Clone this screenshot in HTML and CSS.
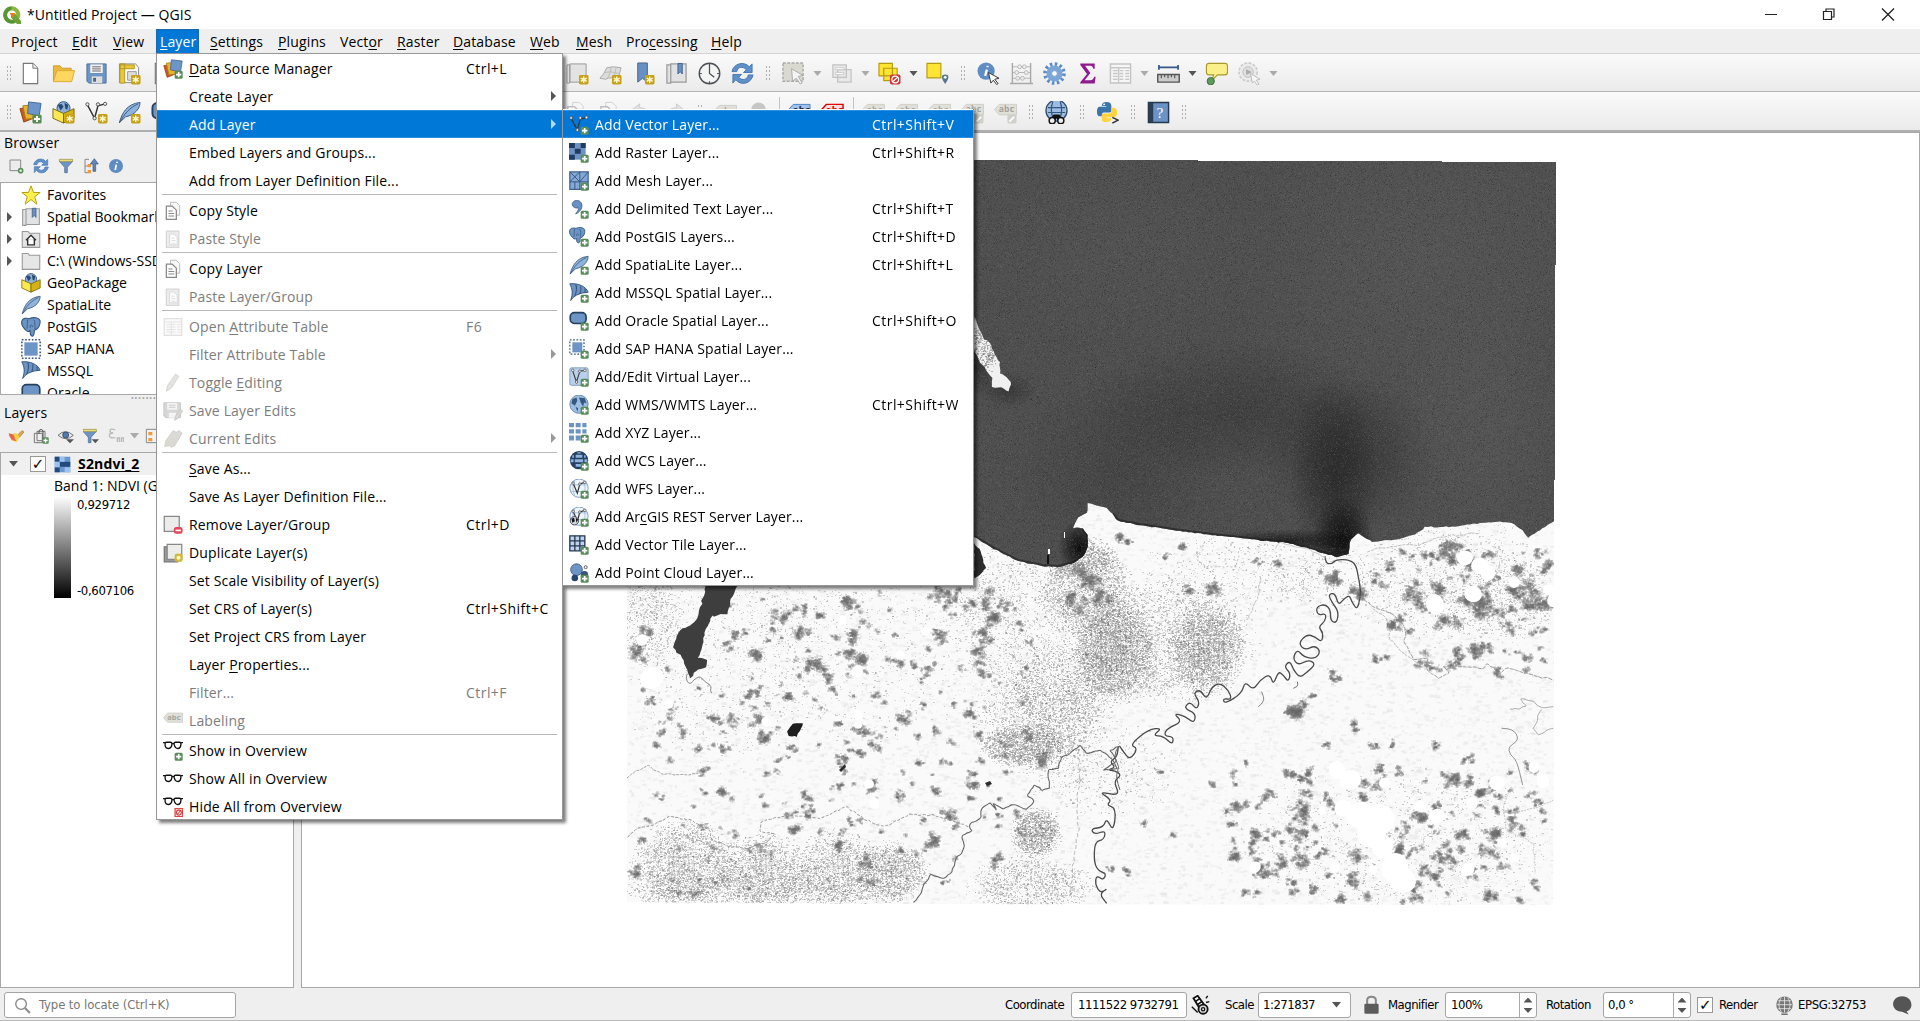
FILE: index.html
```html
<!DOCTYPE html>
<html lang="en">
<head>
<meta charset="utf-8">
<title>*Untitled Project — QGIS</title>
<link rel="stylesheet" href="styles.css">
</head>
<body>
<svg class="sprite" aria-hidden="true">
  <symbol id="plus" viewBox="0 0 24 24"><rect x="14" y="14" width="9.6" height="9.6" rx="1.8" fill="#5a8c5a"/><path d="M18.8 15.6v6.4M15.6 18.8h6.4" stroke="#fff" stroke-width="2"/></symbol>
  <symbol id="star" viewBox="0 0 24 24"><rect x="13.5" y="13.5" width="10" height="10" rx="1.5" fill="#c4a21c"/><path d="M18.5 15v7M15.4 16.8l6.2 3.5M21.6 16.8l-6.2 3.5" stroke="#fff6c8" stroke-width="1.5"/></symbol>
  <symbol id="logo" viewBox="0 0 20 20"><path d="M10 3.3a6.7 6.7 0 1 0 3 12.6" fill="none" stroke="#589632" stroke-width="4"/><path d="M9.5 3.3a6.7 6.7 0 0 1 6.3 9.2" fill="none" stroke="#8cb63c" stroke-width="4"/><path d="M9 8.500h4l6 7.500v3h-4L9 12.500z" fill="#6fa236"/><path d="M8 8h5l-1.500 4.500L9 11z" fill="#ee7913"/></symbol>
  <symbol id="new" viewBox="0 0 24 24"><path d="M4.500 1.500h10l5 5v16h-15z" fill="#fff" stroke="#777" stroke-width="1.200"/><path d="M14.500 1.500v5h5" fill="#eee" stroke="#777"/></symbol>
  <symbol id="open" viewBox="0 0 24 24"><path d="M1.500 20V4h7l2 2.500h9.500V10" fill="#e8b93c" stroke="#cf9c2c"/><path d="M1.500 20.500L5 9h18.500l-3 11.500z" fill="#ffd75e" stroke="#dca935"/></symbol>
  <symbol id="save" viewBox="0 0 24 24"><path d="M2 2h20v20H4l-2-2z" fill="#6d95c4" stroke="#4c6f98"/><path d="M5.500 2.500h13v9h-13z" fill="#f2f2f2"/><path d="M7.500 5h9M7.500 7.200h9M7.500 9.400h9" stroke="#666"/><path d="M7 15h11v7H7z" fill="#ddd"/><path d="M8.500 16.500h3v4h-3z" fill="#47658b"/></symbol>
  <symbol id="layout" viewBox="0 0 24 24"><path d="M1.500 21.500V2h17l3 4v15.500z" fill="#fff" stroke="#8a8a8a"/><path d="M2 2h5v20H2zM2 3h15v4H2z" fill="#e9c93b" stroke="#b3971f"/><path d="M10 10h9v9h-9z" fill="#ddd" stroke="#999"/><use href="#star"/></symbol>
  <symbol id="dsm" viewBox="0 0 24 24"><path d="M1 8l11-2 3 12-10 4z" fill="#c75a1e" stroke="#964213"/><path d="M4 5l11-1 1 14-9 1z" fill="#e9b42d" stroke="#a97e17"/><path d="M10 1l13 1.500-2 13L9 13z" fill="#6c96c9" stroke="#44658e"/><use href="#plus"/></symbol>
  <symbol id="gpkg" viewBox="0 0 24 24"><circle cx="12" cy="7.500" r="6.800" fill="#8fb0d8" stroke="#35587f"/><path d="M6 4l4-1 2 3-3 4zM13 2l4 2-1 5-2-1z" fill="#27496f"/><path d="M1 8l11 5v10L1 18z" fill="#fce94f" stroke="#7a6a12"/><path d="M23 8l-11 5v10l11-5z" fill="#d6b212" stroke="#7a6a12"/></symbol>
  <symbol id="gpkgnew" viewBox="0 0 24 24"><use href="#gpkg"/><use href="#star"/></symbol>
  <symbol id="vee" viewBox="0 0 24 24"><path d="M2.500 4L10 18 13.500 5 21 3" fill="none" stroke="#333" stroke-width="1.500"/><g fill="#eee" stroke="#555"><circle cx="2.500" cy="3.500" r="1.700"/><circle cx="13.500" cy="3.500" r="1.700"/><circle cx="21" cy="3" r="1.700"/><circle cx="10" cy="18" r="1.700"/></g></symbol>
  <symbol id="veenew" viewBox="0 0 24 24"><use href="#vee"/><use href="#star"/></symbol>
  <symbol id="addvec" viewBox="0 0 24 24"><use href="#vee"/><use href="#plus"/></symbol>
  <symbol id="feather" viewBox="0 0 24 24"><path d="M1.500 22.500C4 13 9 3 23 1.500c0 6-5 13-15 15z" fill="#8fb4dc" stroke="#3d5a7d"/><path d="M1.500 23C6 14 12 7 21 3" fill="none" stroke="#3d5a7d"/></symbol>
  <symbol id="feathernew" viewBox="0 0 24 24"><use href="#feather"/><use href="#star"/></symbol>
  <symbol id="addfeather" viewBox="0 0 24 24"><use href="#feather"/><use href="#plus"/></symbol>
  <symbol id="raster" viewBox="0 0 24 24"><path d="M1 1h22v22H1z" fill="#6a97cd"/><path d="M1 1h7v7H1zM15 8h8v7h-8zM8 8h7v7H8zM1 16h7v7H1z" fill="#234a7c"/><path d="M8 1h7v7H8zM15 16h8v7h-8zM1 8h7v8H1z" fill="#9cc3ee"/></symbol>
  <symbol id="addraster" viewBox="0 0 24 24"><path d="M0 0h20v20H0z" fill="#6d93c4"/><path d="M0 0h7v6H0zM14 0h6v6h-6zM7 7h7v6H7zM0 14h7v6H0z" fill="#1f3b60"/><use href="#plus"/></symbol>
  <symbol id="addmesh" viewBox="0 0 24 24"><path d="M1 1h22v21H1z" fill="#83a9d6" stroke="#43648c" stroke-width="1.500"/><path d="M1 13h22M13 1v21M1 1l12 12M13 1L1 13M23 1L13 13M7 13v9" stroke="#3a5a82" stroke-width="1.200"/><use href="#plus"/></symbol>
  <symbol id="addcomma" viewBox="0 0 24 24"><path d="M4 7C3 1 14-1 15.500 7c.5 5-3 9-7.500 11 2-3 4-5 3-7.500-3 1-6.500-.5-7-3.500z" fill="#6991c4" stroke="#3b5d87"/><use href="#plus"/></symbol>
  <symbol id="pg" viewBox="0 0 24 24"><path d="M1 5c1-4 6-4 9-3 4-2 12-2 13 3 0 4-2 9-5 10l-2 1c0 3 0 6-2 7-3 0-3-3-3-7-1 2-4 2-6-1C2 12 0 9 1 5z" fill="#6c95c5" stroke="#36557c" stroke-width="1.300"/><path d="M8 3c-1 4 0 8-1 11M15 3c3 3 1 6 2 12M11 13c-1-4 3-4 3-1" fill="none" stroke="#36557c"/></symbol>
  <symbol id="addpg" viewBox="0 0 24 24"><use href="#pg" width="20" height="20"/><use href="#plus"/></symbol>
  <symbol id="mssql" viewBox="0 0 24 24"><path d="M1 1c10-1 19 3 22 10l-7 1C8 14 5 17 2 21 5 12 4 7 1 1z" fill="#6c95c5" stroke="#36557c" stroke-width="1.200"/><path d="M8 1.500c2 5 1 9-1 14M14 4c1 4 0 7-1 9M19 6.500c1 2 0 4 0 5" fill="none" stroke="#36557c" stroke-width="1.300"/></symbol>
  <symbol id="addmssql" viewBox="0 0 24 24"><use href="#mssql"/><use href="#plus"/></symbol>
  <symbol id="oracle" viewBox="0 0 24 24"><rect x="1.500" y="2" width="21" height="16" rx="5" fill="#6c95c5" stroke="#25405f" stroke-width="2"/></symbol>
  <symbol id="addoracle" viewBox="0 0 24 24"><rect x="1.500" y="2" width="19" height="13" rx="5" fill="#6c95c5" stroke="#25405f" stroke-width="2"/><use href="#plus"/></symbol>
  <symbol id="hana" viewBox="0 0 24 24"><path d="M4 4h16v16H4z" fill="#6c95c5"/><path d="M1 1h22v22H1z" fill="none" stroke="#36557c" stroke-width="1.800" stroke-dasharray="2 2"/></symbol>
  <symbol id="addhana" viewBox="0 0 24 24"><path d="M4 4h12v12H4z" fill="#6c95c5"/><path d="M1 1h17v17H1z" fill="none" stroke="#36557c" stroke-width="1.500" stroke-dasharray="2 2"/><use href="#plus"/></symbol>
  <symbol id="addvirtual" viewBox="0 0 24 24"><rect x="1" y="1" width="22" height="21" rx="2" fill="#b9d0ec" stroke="#7791b2"/><path d="M4.500 5L9 18 13 5 19 4" fill="none" stroke="#444" stroke-width="1.400"/><g fill="#fff" stroke="#555"><circle cx="4.500" cy="4" r="1.500"/><circle cx="13" cy="5" r="1.500"/><circle cx="19" cy="4" r="1.500"/><circle cx="9" cy="18" r="1.500"/></g><use href="#plus"/></symbol>
  <symbol id="addwms" viewBox="0 0 24 24"><circle cx="12" cy="11" r="11" fill="#9dbce2" stroke="#5d7fa8"/><path d="M4 5l5-2 1 4-3 6-4-3zM12 3l7 1 2 6-3-1-1 5-3-5zM8 14l3 2-1 4z" fill="#35587f"/><use href="#plus"/></symbol>
  <symbol id="addxyz" viewBox="0 0 24 24"><path d="M0 0h6v5H0zM8 0h6v5H8zM16 0h5v5h-5zM0 7.500h6v5H0zM8 7.500h6v5H8zM16 7.500h5v5h-5zM0 15h6v6H0zM8 15h6v6H8z" fill="#6c95c5"/><use href="#plus"/></symbol>
  <symbol id="addwcs" viewBox="0 0 24 24"><circle cx="12" cy="11" r="11" fill="#233f61"/><path d="M8 4.500h8V8H8zM7 10h10v3.500H7zM8 15.500h8V19H8zM2 10h3.500v3.500H2zM18.500 10H22v3.500h-3.500zM4 5h2v3H4zM18 5h2v3h-2zM10 1.500h4v1.500h-4z" fill="#8eb3df"/><use href="#plus"/></symbol>
  <symbol id="addwfs" viewBox="0 0 24 24"><circle cx="12" cy="11" r="11" fill="#eef4fb" stroke="#6e93c0"/><path d="M2 7h20M2 15h20M7 2c-3 6-3 12 0 18M17 2c3 6 3 12 0 18" fill="none" stroke="#9bbbe0"/><path d="M5 5l5 12L13 6l6-2" fill="none" stroke="#333" stroke-width="1.400"/><g fill="#fff" stroke="#555"><circle cx="5" cy="5" r="1.500"/><circle cx="13" cy="6" r="1.500"/><circle cx="19" cy="4" r="1.500"/></g><use href="#plus"/></symbol>
  <symbol id="addarc" viewBox="0 0 24 24"><use href="#addwfs"/><circle cx="6.500" cy="16.500" r="5" fill="#cfd9e4" stroke="#334"/><path d="M3 14l3-1 1 4-3 2zM8 13l3 2-2 4z" fill="#111"/></symbol>
  <symbol id="addvt" viewBox="0 0 24 24"><path d="M1 1h18v18H1z" fill="#bdd3ee" stroke="#25384f" stroke-width="1.600"/><path d="M7 1v18M13 1v18M1 7h18M1 13h18" stroke="#25384f" stroke-width="1.600"/><use href="#plus"/></symbol>
  <symbol id="addpc" viewBox="0 0 24 24"><circle cx="9" cy="8" r="7" fill="#6c95c5" stroke="#36557c"/><circle cx="7" cy="18" r="4" fill="#27466c"/><circle cx="18.500" cy="14" r="4.500" fill="#36557c"/><circle cx="20" cy="5" r="1.800" fill="#fff" stroke="#444"/><use href="#plus"/></symbol>
  <symbol id="copy" viewBox="0 0 24 24"><path d="M9 1.500h7l4 4V17H9z" fill="#f7f7f7" stroke="#b0b0b0"/><path d="M4 6h7l5 5v11H4z" fill="#fff" stroke="#888" stroke-width="1.500"/><path d="M6.500 12h5M6.500 15h7M6.500 18h7" stroke="#888" stroke-width="1.300"/></symbol>
  <symbol id="paste" viewBox="0 0 24 24"><path d="M4 2.500h15V22H4z" fill="#ececec" stroke="#d8d8d8" stroke-width="1.500"/><path d="M8 6h5l4 4v9H8z" fill="#fff" stroke="#d2d2d2"/><path d="M10 11h4M10 14h5M10 17h5" stroke="#d2d2d2"/></symbol>
  <symbol id="table" viewBox="0 0 24 24"><path d="M1.500 2h21v20h-21z" fill="#f6f6f6" stroke="#c4c4c4" stroke-width="1.500"/><path d="M2 6h20M4 9h5M11 9h4M17 9h4M4 12h5M11 12h4M17 12h4M4 15h5M11 15h4M17 15h4M4 18h5M11 18h4M17 18h4M10 6v16" stroke="#c8c8c8" stroke-width="1.400"/></symbol>
  <symbol id="pencil" viewBox="0 0 24 24"><path d="M4 22l1.500-7L15 1.500l4 2.500-9 14z" fill="#e4e4e2" stroke="#d0d0ce"/></symbol>
  <symbol id="savedit" viewBox="0 0 24 24"><path d="M1 2h20v18H3l-2-2z" fill="#d6d6d6" stroke="#c6c6c6"/><path d="M5 2.500h12v8H5zM7 14h9v6H7z" fill="#f4f4f4"/><path d="M7 5h8M7 7.500h8" stroke="#c4c4c4"/><path d="M14 23l1-5 6-8 2.500 2-6 9z" fill="#dbdad6" stroke="#c4c4c4"/></symbol>
  <symbol id="edits" viewBox="0 0 24 24"><path d="M2 21l1.500-7L12 2l4 2 3-2 4 3-9 15-4 2-2-2z" fill="#dbd9d3" stroke="#cfcdc8"/></symbol>
  <symbol id="remove" viewBox="0 0 24 24"><path d="M1.500 1.500h18v18h-18z" fill="#ececea" stroke="#888" stroke-width="1.500"/><rect x="13" y="14.500" width="10.500" height="8" rx="3" fill="#e0485a"/><path d="M15 18.500h6.500" stroke="#fff" stroke-width="2"/></symbol>
  <symbol id="dup" viewBox="0 0 24 24"><path d="M1.500 4.500h16v18h-16z" fill="#999" stroke="#777" stroke-width="1.500"/><path d="M5 1.500h17.500v18H5z" fill="#ececea" stroke="#888" stroke-width="1.500"/><rect x="14" y="13" width="9.500" height="9.500" rx="2" fill="#d3b93a"/><circle cx="18.700" cy="17.700" r="2.500" fill="#fff6bb"/></symbol>
  <symbol id="tag" viewBox="0 0 24 24"><path d="M.5 8l5-5.500h18v11h-18z" fill="#e0e0d9" stroke="#cfcfc8"/><text x="5" y="11" font-size="9" font-weight="700" fill="#a5a5a0">abc</text></symbol>
  <symbol id="glass" viewBox="0 0 24 24"><path d="M0 8h3M21 8h3M10.500 9.500q1.500-1.500 3 0" stroke="#111" stroke-width="1.500" fill="none"/><path d="M4.500 7.500h4.500q2 0 1.700 2.500-.7 5-4.500 5T2.500 10q-.3-2.500 2-2.500zM15 7.500h4.500q2.300 0 2 2.500-.5 5-3.700 5t-4.500-5q-.3-2.500 1.700-2.500z" fill="#fff" stroke="#111" stroke-width="1.600"/></symbol>
  <symbol id="glassadd" viewBox="0 0 24 24"><use href="#glass" y="-6"/><use href="#plus"/></symbol>
  <symbol id="glasshide" viewBox="0 0 24 24"><use href="#glass" y="-6"/><rect x="14.500" y="14" width="9" height="9.500" fill="#fff" stroke="#d44" stroke-width="1.500"/><circle cx="19" cy="18.700" r="3" fill="none" stroke="#d44" stroke-width="1.500"/><path d="M17 21l4-4.500" stroke="#d44" stroke-width="1.300"/></symbol>
  <symbol id="mapnew" viewBox="0 0 24 24"><path d="M1 3h3v19H1zM4 2h17v19H4z" fill="#e3e3e3" stroke="#999"/><use href="#star"/></symbol>
  <symbol id="map3d" viewBox="0 0 24 24"><path d="M1 17Q6 12 8 6q6-2 15 0l-3 12q-8-3-13 0z" fill="#dcdcdc" stroke="#aaa"/><path d="M5 11q7-2 16 1M13 5q-1 6-4 12M18 5q-1 7-3 12" fill="none" stroke="#bbb"/><use href="#star"/></symbol>
  <symbol id="bmnew" viewBox="0 0 24 24"><path d="M6 1h10v20l-5-4-5 4z" fill="#6990c2" stroke="#42638c"/><use href="#star"/></symbol>
  <symbol id="book" viewBox="0 0 24 24"><path d="M2 3h4v19H2zM6 2h16v19H6z" fill="#e0e2e4" stroke="#9a9a9a" stroke-width="1.300"/><path d="M13.500 1.500h4.500v11l-2.200-2.500-2.300 2.500z" fill="#6990c2" stroke="#42638c"/></symbol>
  <symbol id="clock" viewBox="0 0 24 24"><circle cx="12" cy="12" r="10.700" fill="#f4f4f4" stroke="#4b5054" stroke-width="1.500"/><path d="M12 4v8l5 4M12 2v2M12 20v2M2 12h2M20 12h2" fill="none" stroke="#4b5054" stroke-width="1.300"/></symbol>
  <symbol id="refresh" viewBox="0 0 24 24"><path d="M1 10C3 1 14-1 19 5l3-3v9h-9l3-3C12 4 7 5 6 10z" fill="#5f90ca" stroke="#4677b0"/><path d="M23 13.500C21 23 10 25 5 18.500L2 22v-9h9l-3 3c4 4 9 2.500 10-2.500z" fill="#5f90ca" stroke="#4677b0"/></symbol>
  <symbol id="select" viewBox="0 0 24 24"><path d="M1 1h21v19H1z" fill="#d9d9d0" stroke="#aaa" stroke-width="1.500" stroke-dasharray="3 1.500"/><path d="M10 7l12 7-5 1 4 7-2 1-4-6-4 3z" fill="#f4f4f4" stroke="#aaa"/></symbol>
  <symbol id="forms" viewBox="0 0 24 24"><path d="M8 8h14v13H8zM3 3h14v13H3z" fill="#e8e8e8" stroke="#c2c2c2" stroke-width="1.300"/><path d="M5.500 6h9v2h-9zM5.500 11h9v2h-9z" fill="#fff" stroke="#ccc"/></symbol>
  <symbol id="desel" viewBox="0 0 24 24"><path d="M1 1.500h14v13H1zM6 6.500h14v13H6z" fill="#ffe433" stroke="#b59b14" stroke-width="1.200"/><rect x="12.500" y="13" width="11" height="10.500" rx="2" fill="#c8373b"/><circle cx="18" cy="18.300" r="3.500" fill="none" stroke="#fff" stroke-width="1.300"/><path d="M15.500 20.500l5-4.500" stroke="#fff" stroke-width="1.300"/></symbol>
  <symbol id="selpin" viewBox="0 0 24 24"><path d="M1 1.500h14.500v15H1z" fill="#ffe433" stroke="#b59b14" stroke-width="1.200"/><path d="M20 23c-5-7-4-10 0-10s5 3 0 10z" fill="#56768f"/><circle cx="20" cy="16" r="1.500" fill="#fff"/></symbol>
  <symbol id="identify" viewBox="0 0 24 24"><circle cx="9.500" cy="9.500" r="9" fill="#5f8dc3"/><path d="M11 4v1.500M10.300 8L8.500 14.500" stroke="#fff" stroke-width="2.400"/><path d="M12 11l11 6-4.500 1 3.500 4.500-1.500 1-3.500-4.500-2.500 3z" fill="#fff" stroke="#333"/></symbol>
  <symbol id="abacus" viewBox="0 0 24 24"><path d="M2.500 1v22M21.500 1v22M0 22.500h24" stroke="#aaa" stroke-width="1.500"/><path d="M3 5h18M3 11h18M3 17h18" stroke="#b5b5b5"/><g fill="#eee" stroke="#b5b5b5"><circle cx="10" cy="5" r="2"/><circle cx="15" cy="5" r="2"/><circle cx="7" cy="11" r="2"/><circle cx="17" cy="11" r="2"/><circle cx="8" cy="17" r="2"/><circle cx="13" cy="17" r="2"/></g></symbol>
  <symbol id="gear" viewBox="0 0 24 24"><circle cx="12" cy="12" r="9.800" fill="none" stroke="#5c8cc8" stroke-width="4" stroke-dasharray="2.600 2.530"/><circle cx="12" cy="12" r="5.800" fill="none" stroke="#7ba5d8" stroke-width="5"/><circle cx="12" cy="12" r="3" fill="#fff" stroke="#5c8cc8"/></symbol>
  <symbol id="sigma" viewBox="0 0 24 24"><path d="M4.500 1.500h15V7h-1.500c-.5-2.500-1.500-3-4-3H9.500l5.500 7.500L9 19h6c2.500 0 3-1 4-3.500h1.500l-1 7h-15V21l7-8.500-7-9.500z" fill="#8e1c8e"/></symbol>
  <symbol id="measure" viewBox="0 0 24 24"><path d="M2 5.500h20M2 3v5M22 3v5" stroke="#35598a" stroke-width="1.800"/><path d="M.8 13h22.400v8H.8z" fill="#ccc" stroke="#555" stroke-width="1.500"/><path d="M4.500 13v4M8 13v3M11.500 13v4M15 13v3M18.500 13v4" stroke="#555" stroke-width="1.200"/></symbol>
  <symbol id="tip" viewBox="0 0 24 24"><path d="M4 1.500h17q2.500 0 2.500 3v6q0 3-2.500 3h-8l-6 6 2-6H4q-2.500 0-2.500-3v-6q0-3 2.500-3z" fill="#fbef8a" stroke="#a89a2a" stroke-width="1.200"/><circle cx="6" cy="20" r="3.800" fill="#5d9a5d" stroke="#3f6f3f"/></symbol>
  <symbol id="act" viewBox="0 0 24 24"><circle cx="10.500" cy="10.500" r="9.500" fill="#ececec" stroke="#ccc" stroke-width="1.800" stroke-dasharray="3 1.500"/><circle cx="10.500" cy="10.500" r="5.500" fill="#e0e0e0" stroke="#bdbdbd"/><path d="M8.500 7.500l6 3-6 3z" fill="#aaa"/><path d="M13 12l10 6-4 1 3 4-2 1-3-4-2 2z" fill="#f6f6f6" stroke="#bbb"/></symbol>
  <symbol id="undo" viewBox="0 0 24 24"><path d="M1 10l9-7v4q11 0 12 12-4-7-12-6v4z" fill="#e0e0e0" stroke="#ccc"/></symbol>
  <symbol id="tagblue" viewBox="0 0 24 24"><path d="M.5 8l5-5.500h17.500v11H5z" fill="#9cc2f0" stroke="#4b80c0"/><text x="5" y="11" font-size="10" font-weight="700" fill="#222">abc</text></symbol>
  <symbol id="tagred" viewBox="0 0 24 24"><path d="M.5 8l5-5.500h17.500v11H5z" fill="#fbdcdc" stroke="#d00" stroke-width="1.500"/><text x="5" y="11" font-size="10" font-weight="700" fill="#c00">abc</text></symbol>
  <symbol id="tagedit" viewBox="0 0 24 24"><use href="#tag" y="1"/><rect x="14" y="14" width="9.500" height="9.500" rx="1.500" fill="#cfcfcb"/><path d="M16 21.500l5-5" stroke="#fff" stroke-width="2"/></symbol>
  <symbol id="dot" viewBox="0 0 24 24"><circle cx="12" cy="9" r="7.500" fill="#c6c6c4"/></symbol>
  <symbol id="metasearch" viewBox="0 0 24 24"><circle cx="12" cy="10" r="11" fill="#9dbce2" stroke="#2d4a6d" stroke-width="1.300"/><path d="M3 7h18M3 12h18M8 1c-2 6-2 10 0 16M16 1c2 6 2 10 0 16" fill="none" stroke="#35587f" stroke-width="1.300"/><path d="M9 14h6l4 7h-5l-2-3-2 3H5z" fill="#111"/><circle cx="7.500" cy="20.500" r="3.200" fill="#eee" stroke="#111" stroke-width="1.500"/><circle cx="16.500" cy="20.500" r="3.200" fill="#eee" stroke="#111" stroke-width="1.500"/></symbol>
  <symbol id="python" viewBox="0 0 24 24"><path d="M6 5q0-4 5-4t5 4v5q0 2-2 2H8q-2 0-2 4H4q-3 0-3-5t3-5h7V5.500z" fill="#3a74a8"/><path d="M16 7h2q4 0 4 5 0 4-3 5h-8v1h5q0 4-5 4t-5-3v-4q0-2 2-2h6q2 0 2-3z" fill="#ffd23e"/><circle cx="8.500" cy="3.500" r="1" fill="#fff"/><path d="M17 17l6 3-6 3" fill="none" stroke="#333" stroke-width="1.500"/></symbol>
  <symbol id="help" viewBox="0 0 24 24"><path d="M1.500 1.500h21v21h-21z" fill="#6b93c6" stroke="#26384d" stroke-width="1.500"/><path d="M2 2h4.500v20H2z" fill="#2e3f54"/><text x="10" y="18" font-size="16" font-family="Liberation Serif, serif" fill="#fff">?</text></symbol>
  <symbol id="addlay" viewBox="0 0 24 24"><path d="M3 3h16v16H3z" fill="#ececec" stroke="#888" stroke-width="1.500"/><circle cx="19" cy="19" r="4.200" fill="#5a8c5a"/><circle cx="19" cy="19" r="1.800" fill="#dfe"/></symbol>
  <symbol id="filter" viewBox="0 0 24 24"><path d="M2 5h20l-8 9v8h-4v-8z" fill="#6c95c5" stroke="#42638c"/><path d="M2 2h20v3.500H2z" fill="#e9dc7a" stroke="#8f8a4a"/></symbol>
  <symbol id="collapse" viewBox="0 0 24 24"><path d="M3 2h6M3 2v20h6M3 12h6" stroke="#888" fill="none" stroke-width="1.500"/><path d="M7 9h5v5H7zM7 18h5v5H7z" fill="#f29a3a"/><path d="M17 1l6 8h-4v11h-4V9h-4z" fill="#5f86b5" stroke="#36557c"/></symbol>
  <symbol id="collapseall" viewBox="0 0 24 24"><path d="M2 2h20v20H2z" fill="#f2f2f2" stroke="#888" stroke-width="1.500"/><path d="M5 6h6v5H5zM5 15h6v5H5z" fill="#f29a3a"/></symbol>
  <symbol id="info" viewBox="0 0 24 24"><circle cx="12" cy="12" r="10.500" fill="#5f8dc3"/><path d="M13.500 5.500v2M12.500 10l-1.700 8" stroke="#fff" stroke-width="2.500"/></symbol>
  <symbol id="favstar" viewBox="0 0 24 24"><path d="M12 1l3 8h8l-6.500 5L19 23l-7-5.500L5 23l2.500-9L1 9h8z" fill="#fff04e" stroke="#b3a01c" stroke-width="1.200"/></symbol>
  <symbol id="home" viewBox="0 0 24 24"><path d="M1.500 3h7l1.500 2h12.500v17h-21z" fill="#e4e4e4" stroke="#999" stroke-width="1.300"/><path d="M6 13.500l6-6 6 6M8 12v7h8v-7" fill="#fff" stroke="#333" stroke-width="1.700"/></symbol>
  <symbol id="folder" viewBox="0 0 24 24"><path d="M1.500 3h7l1.500 2h12.500v17h-21z" fill="#e6e6e6" stroke="#999" stroke-width="1.300"/></symbol>
  <symbol id="brush" viewBox="0 0 24 24"><path d="M14 11l7-7 3 2-7 8z" fill="#e0a75a" stroke="#a27421"/><path d="M8 8q8-1 9 6l-4 7-9-3z" fill="#f4d03c"/><path d="M1 8q8 1 8 4l3 8q-10-2-11-12z" fill="#e2674e"/></symbol>
  <symbol id="group" viewBox="0 0 24 24"><path d="M2 8h12v14H2zM6 5h12v14H6z" fill="#eee" stroke="#777" stroke-width="1.500"/><path d="M9 9V4q3-4 6 0v12" fill="none" stroke="#555" stroke-width="1.500"/><use href="#plus"/></symbol>
  <symbol id="eye" viewBox="0 0 24 24"><path d="M0 11q11-11 23 0-11 10-23 0z" fill="#e8e8e8" stroke="#777" stroke-width="1.500"/><circle cx="11.500" cy="10.500" r="4.500" fill="#4d7db8" stroke="#234"/><path d="M12 17h12l-6 6z" fill="#555"/></symbol>
  <symbol id="filterdd" viewBox="0 0 24 24"><use href="#filter" x="-2"/><path d="M13 17h11l-5.500 6z" fill="#555"/></symbol>
  <symbol id="expr" viewBox="0 0 24 24"><path d="M11 3q-8-3-8 1.500 0 3 5 3-6 0-6 4t9 3M14 21v-6h3v6M20 21v-6h3v6" stroke="#bbb" fill="none" stroke-width="2"/></symbol>
  <symbol id="search" viewBox="0 0 24 24"><circle cx="10" cy="10" r="7.500" fill="none" stroke="#8a8a8a" stroke-width="2"/><path d="M15.500 15.500l7 7" stroke="#8a8a8a" stroke-width="3"/></symbol>
  <symbol id="lock" viewBox="0 0 24 24"><path d="M6.500 11V6q0-4.500 5.500-4.500T17.500 6v5" fill="none" stroke="#888" stroke-width="2.500"/><rect x="3" y="10.500" width="18" height="12.500" rx="1.500" fill="#5c5c5c"/></symbol>
  <symbol id="mouse" viewBox="0 0 24 24"><path d="M3 4l5-3 8 11-5 5z" fill="#fff" stroke="#111" stroke-width="2.200"/><path d="M5 8l6-4M7 12l6-4" stroke="#111" stroke-width="2"/><circle cx="14.500" cy="17" r="5.500" fill="#ddd" stroke="#111" stroke-width="2.200"/><circle cx="14.500" cy="17" r="2" fill="none" stroke="#111" stroke-width="1.500"/><path d="M1 14l7 7M18 4l2-3M18 9l4-1" stroke="#111" stroke-width="1.700"/></symbol>
  <symbol id="globe" viewBox="0 0 24 24"><circle cx="12" cy="11" r="10.500" fill="#777"/><path d="M2 11h20M4 6h16M4 16h16M12 1v20M8 2c-4 6-4 12 0 18M16 2c4 6 4 12 0 18" fill="none" stroke="#eee"/><path d="M8 23h8" stroke="#777" stroke-width="2"/></symbol>
  <symbol id="msg" viewBox="0 0 24 24"><path d="M12 1.500c14 0 14 17 5.500 18L20 23.500l-8-3.500C-2.500 20-2 1.500 12 1.500z" fill="#555"/></symbol>
</svg>

<header class="title"><svg class="logo"><use href="#logo"/></svg><span class="title-text">*Untitled Project — QGIS</span>
  <svg class="winbtns" viewBox="0 0 140 20"><path d="M3 9.500h12" stroke="#222"/><path d="M61.500 6.500h8v8h-8zM64 6V4h8v8h-2" fill="none" stroke="#222" stroke-width="1.200"/><path d="M120 3.500l12 12M132 3.500l-12 12" stroke="#222" stroke-width="1.300"/></svg>
</header>
<nav class="menubar">
  <span>Pro<u>j</u>ect</span><span><u>E</u>dit</span><span><u>V</u>iew</span><span class="on"><u>L</u>ayer</span><span><u>S</u>ettings</span><span><u>P</u>lugins</span><span>Vect<u>o</u>r</span><span><u>R</u>aster</span><span><u>D</u>atabase</span><span><u>W</u>eb</span><span><u>M</u>esh</span><span>Pro<u>c</u>essing</span><span><u>H</u>elp</span>
</nav>
<div class="toolbar"><i class="grip first"></i>
  <svg><use href="#new"/></svg><svg><use href="#open"/></svg><svg><use href="#save"/></svg><svg><use href="#layout"/></svg><svg><use href="#new"/></svg><i class="under under1"></i>
  <svg><use href="#mapnew"/></svg><svg><use href="#map3d"/></svg><svg><use href="#bmnew"/></svg><svg><use href="#book"/></svg><svg><use href="#clock"/></svg><svg><use href="#refresh"/></svg><i class="grip"></i>
  <svg><use href="#select"/></svg><i class="dd pale"></i><svg><use href="#forms"/></svg><i class="dd pale"></i><svg><use href="#desel"/></svg><i class="dd"></i><svg><use href="#selpin"/></svg><i class="grip"></i>
  <svg><use href="#identify"/></svg><svg><use href="#abacus"/></svg><svg><use href="#gear"/></svg><svg><use href="#sigma"/></svg><svg><use href="#table"/></svg><i class="dd pale"></i><svg><use href="#measure"/></svg><i class="dd"></i><svg><use href="#tip"/></svg><svg><use href="#act"/></svg><i class="dd pale"></i>
</div>
<div class="toolbar second"><i class="grip first"></i>
  <svg><use href="#dsm"/></svg><svg><use href="#gpkgnew"/></svg><svg><use href="#veenew"/></svg><svg><use href="#feathernew"/></svg><svg><use href="#oracle"/></svg><i class="under under2"></i>
  <svg class="faint"><use href="#copy"/></svg><svg class="faint"><use href="#copy"/></svg><svg><use href="#undo"/></svg><svg class="flip"><use href="#undo"/></svg><i class="grip"></i>
  <svg><use href="#tag" y="2"/></svg><svg><use href="#dot"/></svg><i class="bar"></i><svg><use href="#tagblue" y="1"/></svg><svg><use href="#tagred" y="1"/></svg><i class="bar"></i><svg><use href="#tag" y="1"/></svg><svg><use href="#tag" y="1"/></svg><svg><use href="#tag" y="1"/></svg><svg><use href="#tagedit"/></svg><svg><use href="#tagedit"/></svg><i class="grip"></i>
  <svg><use href="#metasearch"/></svg><i class="grip"></i><svg><use href="#python"/></svg><i class="grip"></i><svg><use href="#help"/></svg><i class="grip"></i>
</div>

<main>
  <aside>
    <h2 class="dock">Browser</h2>
    <div class="tools"><svg><use href="#addlay"/></svg><svg><use href="#refresh"/></svg><svg><use href="#filter"/></svg><svg><use href="#collapse"/></svg><svg><use href="#info"/></svg></div>
    <ul class="tree">
      <li><svg><use href="#favstar"/></svg>Favorites</li>
      <li class="has"><svg><use href="#book"/></svg>Spatial Bookmarks</li>
      <li class="has"><svg><use href="#home"/></svg>Home</li>
      <li class="has"><svg><use href="#folder"/></svg>C:\ (Windows-SSD)</li>
      <li><svg><use href="#gpkg"/></svg>GeoPackage</li>
      <li><svg><use href="#feather"/></svg>SpatiaLite</li>
      <li><svg><use href="#pg"/></svg>PostGIS</li>
      <li><svg><use href="#hana"/></svg>SAP HANA</li>
      <li><svg><use href="#mssql"/></svg>MSSQL</li>
      <li><svg><use href="#oracle"/></svg>Oracle</li>
    </ul>
    <div class="split">·········</div>
    <h2 class="dock layers-head">Layers</h2>
    <div class="tools layer-tools"><svg><use href="#brush"/></svg><svg><use href="#group"/></svg><svg><use href="#eye"/></svg><svg><use href="#filterdd"/></svg><svg><use href="#expr"/></svg><i class="dd pale"></i><svg><use href="#collapseall"/></svg></div>
    <div class="layers">
      <div class="layer"><i class="dd"></i><b class="check">✓</b><svg><use href="#raster"/></svg><strong>S2ndvi_2</strong></div>
      <div class="band">Band 1: NDVI (Gray)</div>
      <div class="legend"><i class="ramp"></i><div class="stops"><span>0,929712</span><span>-0,607106</span></div></div>
    </div>
  </aside>
  <section class="view"><canvas id="map" width="932" height="748"></canvas></section>
</main>

<footer class="status">
  <div class="box locate"><svg><use href="#search"/></svg>Type to locate (Ctrl+K)</div>
  <span class="lab coord">Coordinate</span><div class="box b1">1111522 9732791</div><svg class="s-mouse"><use href="#mouse"/></svg>
  <span class="lab scale">Scale</span><div class="box b2">1:271837<i class="dd"></i></div><svg class="s-lock"><use href="#lock"/></svg>
  <span class="lab magn">Magnifier</span><div class="box b3">100%<i class="spin"></i></div>
  <span class="lab rot">Rotation</span><div class="box b4">0,0 °<i class="spin"></i></div>
  <b class="check">✓</b><span class="lab rend">Render</span><svg class="s-globe"><use href="#globe"/></svg><span class="lab epsg">EPSG:32753</span><svg class="s-msg"><use href="#msg"/></svg>
</footer>

<div class="menu main-menu">
  <div class="row"><svg><use href="#dsm"/></svg><span><u>D</u>ata Source Manager</span><kbd>Ctrl+L</kbd></div>
  <div class="row sub"><span>Create Layer</span></div>
  <div class="row sub hot"><span>Add Layer</span></div>
  <div class="row"><span>Embed Layers and Groups...</span></div>
  <div class="row"><span>Add from Layer Definition File...</span></div>
  <hr>
  <div class="row"><svg><use href="#copy"/></svg><span>Copy Style</span></div>
  <div class="row off"><svg><use href="#paste"/></svg><span>Paste Style</span></div>
  <hr>
  <div class="row"><svg><use href="#copy"/></svg><span>Copy Layer</span></div>
  <div class="row off"><svg><use href="#paste"/></svg><span>Paste Layer/Group</span></div>
  <hr>
  <div class="row off"><svg class="faint"><use href="#table"/></svg><span>Open <u>A</u>ttribute Table</span><kbd>F6</kbd></div>
  <div class="row off sub"><span>Filter Attribute Table</span></div>
  <div class="row off"><svg><use href="#pencil"/></svg><span>Toggle <u>E</u>diting</span></div>
  <div class="row off"><svg><use href="#savedit"/></svg><span>Save Layer Edits</span></div>
  <div class="row off sub"><svg><use href="#edits"/></svg><span>Current Edits</span></div>
  <hr>
  <div class="row"><span><u>S</u>ave As...</span></div>
  <div class="row"><span>Save As Layer Definition File...</span></div>
  <div class="row"><svg><use href="#remove"/></svg><span>Remove Layer/Group</span><kbd>Ctrl+D</kbd></div>
  <div class="row"><svg><use href="#dup"/></svg><span>Duplicate Layer(s)</span></div>
  <div class="row"><span>Set Scale Visibility of Layer(s)</span></div>
  <div class="row"><span>Set CRS of Layer(s)</span><kbd>Ctrl+Shift+C</kbd></div>
  <div class="row"><span>Set Project CRS from Layer</span></div>
  <div class="row"><span>Layer <u>P</u>roperties...</span></div>
  <div class="row off"><span>Filter...</span><kbd>Ctrl+F</kbd></div>
  <div class="row off"><svg><use href="#tag"/></svg><span>Labeling</span></div>
  <hr>
  <div class="row"><svg><use href="#glassadd"/></svg><span>Show in Overview</span></div>
  <div class="row"><svg><use href="#glass"/></svg><span>Show All in Overview</span></div>
  <div class="row"><svg><use href="#glasshide"/></svg><span>Hide All from Overview</span></div>
</div>

<div class="menu sub-menu">
  <div class="row hot"><svg><use href="#addvec"/></svg><span>Add Vector Layer...</span><kbd>Ctrl+Shift+V</kbd></div>
  <div class="row"><svg><use href="#addraster"/></svg><span>Add Raster Layer...</span><kbd>Ctrl+Shift+R</kbd></div>
  <div class="row"><svg><use href="#addmesh"/></svg><span>Add Mesh Layer...</span></div>
  <div class="row"><svg><use href="#addcomma"/></svg><span>Add Delimited Text Layer...</span><kbd>Ctrl+Shift+T</kbd></div>
  <div class="row"><svg><use href="#addpg"/></svg><span>Add PostGIS Layers...</span><kbd>Ctrl+Shift+D</kbd></div>
  <div class="row"><svg><use href="#addfeather"/></svg><span>Add SpatiaLite Layer...</span><kbd>Ctrl+Shift+L</kbd></div>
  <div class="row"><svg><use href="#addmssql"/></svg><span>Add MSSQL Spatial Layer...</span></div>
  <div class="row"><svg><use href="#addoracle"/></svg><span>Add Oracle Spatial Layer...</span><kbd>Ctrl+Shift+O</kbd></div>
  <div class="row"><svg><use href="#addhana"/></svg><span>Add SAP HANA Spatial Layer...</span></div>
  <div class="row"><svg><use href="#addvirtual"/></svg><span>Add/Edit Virtual Layer...</span></div>
  <div class="row"><svg><use href="#addwms"/></svg><span>Add WMS/WMTS Layer...</span><kbd>Ctrl+Shift+W</kbd></div>
  <div class="row"><svg><use href="#addxyz"/></svg><span>Add XYZ Layer...</span></div>
  <div class="row"><svg><use href="#addwcs"/></svg><span>Add WCS Layer...</span></div>
  <div class="row"><svg><use href="#addwfs"/></svg><span>Add WFS Layer...</span></div>
  <div class="row"><svg><use href="#addarc"/></svg><span>Add Ar<u>c</u>GIS REST Server Layer...</span></div>
  <div class="row"><svg><use href="#addvt"/></svg><span>Add Vector Tile Layer...</span></div>
  <div class="row"><svg><use href="#addpc"/></svg><span>Add Point Cloud Layer...</span></div>
</div>
<script src="map.js"></script>
</body>
</html>
```
FILE: styles.css
```css
* { box-sizing: border-box; }
body { margin: 0; width: 1920px; height: 1021px; overflow: hidden; position: relative; display: flex; flex-direction: column; background: #efefef; color: #000; font: 14px/22px "Open Sans", "Noto Sans", sans-serif; letter-spacing: 0.14px; white-space: nowrap; }
svg { display: block; flex: none; overflow: visible; }
i { font-style: normal; display: block; flex: none; }
u { text-underline-offset: 2px; text-decoration-thickness: 1px; }
.sprite { position: absolute; width: 0; height: 0; }

.title { height: 29px; flex: none; background: #fff; display: flex; align-items: center; padding-left: 2px; }
.logo { width: 20px; height: 20px; }
.title-text { margin-left: 5px; letter-spacing: .05px; }
.winbtns { width: 140px; height: 20px; margin: 0 18px 0 auto; }

.menubar { height: 24px; flex: none; display: grid; grid-template-columns: 61px 41px 43px 54px 68px 62px 57px 56px 77px 46px 50px 85px 60px; padding-left: 11px; line-height: 25px; }
.menubar .on { background: #0078d7; color: #fff; padding-left: 4px; margin-right: 11px; box-shadow: inset 0 0 0 1px #1a66a8; }

.toolbar { height: 39px; flex: none; display: flex; align-items: center; background: linear-gradient(#fafafa, #ebebeb); border-top: 1px solid #d4d4d4; border-bottom: 1px solid #b4b4b4; padding-top: 2px; }
.toolbar svg { width: 23px; height: 23px; margin: 0 5px; }
.toolbar.second { border-top: 0; border-bottom: 2px solid #b0b0b0; height: 40px; }
.grip { width: 18px; height: 17px; background: radial-gradient(circle, #b0b0b0 35%, transparent 40%) 0 0 / 3px 4px; background-clip: content-box; padding: 0 6px; }
.grip.first { width: 14px; padding: 0 3px 0 5px; }
.dd { width: 15px; height: 6px; background: #555; clip-path: polygon(3px 0, 12px 0, 7.5px 5.5px); }
.dd.pale { background: #aaa; }
.under1 { width: 382px; }
.under2 { width: 380px; }
.bar { width: 4px; height: 30px; border-left: 1px solid #c4c4c4; margin-left: 4px; }
.faint { opacity: .5; }
.flip { transform: scaleX(-1); }

main { height: 856px; flex: none; display: flex; gap: 7px; }
aside { width: 294px; display: flex; flex-direction: column; }
.dock { margin: 0; font: inherit; height: 20px; padding-left: 4px; line-height: 21px; }
.tools { height: 30px; display: flex; align-items: center; padding: 0 0 2px 8px; gap: 9px; }
.tools svg { width: 16px; height: 16px; }
.tree { margin: 0; padding: 1px 0 0; list-style: none; background: #fff; border: 1px solid #a8a8a8; height: 213px; overflow: hidden; letter-spacing: 0; }
.tree li { height: 22px; display: flex; align-items: center; padding-left: 20px; }
.tree svg { width: 20px; height: 20px; margin-right: 6px; }
.tree .has::before { content: ""; margin: 0 9px 0 -14px; width: 5px; height: 10px; background: #555; clip-path: polygon(0 0, 100% 50%, 0 100%); }
.split { height: 8px; line-height: 6px; text-align: center; color: #999; letter-spacing: 0; }
.layers-head { height: 18px; line-height: 20px; }
.layer-tools { height: 31px; padding-bottom: 1px; }
.layer-tools .dd { margin: 0 -6px; }
.layers { flex: 1; background: #fff; border: 1px solid #a8a8a8; }
.layer { height: 22px; background: #f0f0f0; display: flex; align-items: center; padding-left: 5px; }
.layer svg { width: 17px; height: 17px; margin: 0 7px 0 8px; }
.layer strong { text-decoration: underline; text-underline-offset: 2px; letter-spacing: .2px; }
.check { width: 16px; height: 16px; border: 1px solid #999; background: #fff; font: bold 15px/15px "DejaVu Sans", sans-serif; text-align: center; flex: none; }
.layer .check { margin-left: 9px; }
.band { padding-left: 53px; line-height: 21px; letter-spacing: 0; }
.legend { display: flex; padding-left: 53px; height: 102px; }
.ramp { width: 17px; background: linear-gradient(#fff, #000); }
.stops { display: flex; flex-direction: column; justify-content: space-between; padding: 0 0 0 6px; margin-bottom: -1px; font: 13px/17px "DejaVu Sans Condensed", "DejaVu Sans", sans-serif; letter-spacing: -.35px; }

.view { flex: 1; background: #fff; border: 1px solid #a8a8a8; padding: 27px 0 0 325px; overflow: hidden; }
#map { display: block; }

.status { height: 33px; flex: none; display: flex; align-items: center; padding: 2px 0 0 4px; border-bottom: 1px solid #bbb; font: 13px/24px "DejaVu Sans Condensed", "DejaVu Sans", sans-serif; letter-spacing: -.5px; }
.box { height: 26px; background: #fff; border: 1px solid #a4a4a4; border-radius: 3px; padding-left: 6px; display: flex; align-items: center; flex: none; }
.locate { width: 232px; padding-left: 9px; color: #777; gap: 8px; letter-spacing: -.1px; }
.locate svg { width: 17px; height: 17px; }
.lab { flex: none; }
.coord { width: 66px; margin-left: 769px; }
.b1 { width: 116px; }
.s-mouse { width: 20px; height: 20px; margin-left: 4px; }
.scale { width: 33px; margin-left: 14px; }
.b2 { width: 93px; padding-left: 4px; }
.b2 .dd { margin: 0 6px 0 auto; }
.s-lock { width: 19px; height: 20px; margin-left: 11px; }
.magn { width: 57px; margin-left: 7px; }
.b3 { width: 92px; padding-left: 5px; }
.spin { margin-left: auto; width: 17px; height: 24px; border-left: 1px solid #aaa; display: flex; flex-direction: column; align-items: center; justify-content: center; gap: 5px; }
.spin::before, .spin::after { content: ""; width: 9px; height: 5px; background: #555; clip-path: polygon(0 100%, 50% 0, 100% 100%); }
.spin::after { transform: scaleY(-1); }
.rot { width: 57px; margin-left: 9px; }
.b4 { width: 88px; padding-left: 4px; }
.status .check { margin: 0 6px 0 6px; }
.rend { width: 42px; }
.s-globe { width: 19px; height: 19px; margin: 0 4px 0 14px; }
.epsg { width: 71px; letter-spacing: -.4px; }
.s-msg { width: 20px; height: 20px; margin-left: 23px; }

.menu { position: absolute; background: #fff; border: 1px solid #979797; box-shadow: 3px 3px 3px rgba(0,0,0,.5); }
.main-menu { left: 156px; top: 53px; width: 407px; height: 767px; }
.sub-menu { left: 562px; top: 109px; width: 412px; height: 477px; overflow-x: visible; border-top: 0; padding-top: 1px; }
.row { height: 28px; display: grid; grid-template-columns: 26px 277px 1fr; align-items: center; padding: 1px 0 0 6px; position: relative; }
.row > * { line-height: 27px; }
.row svg { width: 20px; height: 20px; grid-column: 1; grid-row: 1; }
.row span { grid-column: 2; grid-row: 1; }
.row kbd { font: inherit; line-height: 27px; grid-column: 3; grid-row: 1; letter-spacing: .45px; }
.sub::after { content: ""; position: absolute; right: 6px; top: 9px; width: 5px; height: 10px; background: #555; clip-path: polygon(0 0, 100% 50%, 0 100%); }
.off { color: #7d7d7d; }
.off.sub::after { background: #999; }
.hot { background: #0078d7; color: #fff; box-shadow: inset 0 1px #2b8fe0, inset 0 -1px #2b8fe0; }
.hot.sub::after { background: #b9d8f2; }
.menu hr { height: 1px; margin: 0 5px 1px 5px; border: 0; background: #b9b9b9; }
```
FILE: map.js
```js
// Draws the single-band NDVI raster; all coordinates are in window space.
const cv = document.getElementById('map');
const g = cv.getContext('2d');
g.translate(-627, -160);
let seed = 7;
const rnd = () => { seed = (Math.imul(seed, 1664525) + 1013904223) >>> 0; return seed / 4294967296; };
const gauss = () => (rnd() + rnd() + rnd() - 1.5) / 1.5;
const path = (pts, close) => {
  g.beginPath();
  pts.forEach((p, i) => i ? g.lineTo(p[0], p[1]) : g.moveTo(p[0], p[1]));
  if (close) g.closePath();
};
// Subdivides a line or polygon and jitters it so that shores look pixel-ragged.
const ragged = (pts, amp, open) => {
  const out = [];
  pts.forEach((p, i) => {
    if (open && i === pts.length - 1) { out.push(p); return; }
    const q = pts[(i + 1) % pts.length];
    const n = Math.max(1, Math.round(Math.hypot(q[0] - p[0], q[1] - p[1]) / 3));
    for (let k = 0; k < n; k++) out.push([p[0] + (q[0] - p[0]) * k / n + gauss() * amp, p[1] + (q[1] - p[1]) * k / n + gauss() * amp]);
  });
  return out;
};

const frame = [[627, 160], [1198, 160], [1198, 161], [1442, 161], [1442, 162], [1556, 162], [1556, 265], [1555, 265], [1555, 480], [1554, 480], [1554, 700], [1553, 905], [900, 904], [627, 902]];
g.save();
path(frame, true);
g.clip();
g.fillStyle = '#fafafa';
g.fillRect(620, 150, 950, 770);

// Fine light-grey mottling over the land.
for (let i = 0; i < 14000; i++) {
  const v = 222 + rnd() * 28 | 0;
  g.fillStyle = `rgba(${v},${v},${v},.45)`;
  g.fillRect(627 + rnd() * 930, 500 + rnd() * 405, 1 + rnd() * 5, 1 + rnd() * 2);
}

function clump(x, y, r, a = 0.17) {
  const lobes = 4 + (rnd() * 4 | 0);
  for (let k = 0; k < lobes; k++) {
    const cx = x + gauss() * r * 1.5, cy = y + gauss() * r * 1.3;
    const s = r * (.4 + rnd() * .5), n = s * s * 1.2;
    for (let i = 0; i < n; i++) {
      const v = 85 + rnd() * 50 | 0;
      g.fillStyle = `rgba(${v},${v},${v},${a})`;
      g.fillRect(Math.round(cx + gauss() * s), Math.round(cy + gauss() * s), 2 + (rnd() > .5), 2);
    }
  }
}
function speckle(x, y, rx, ry, n, a = 0.3) {
  for (let i = 0; i < n; i++) {
    // Flattened distribution: dense core, soft irregular rim.
    const t = rnd() * 6.283, d = Math.sqrt(rnd()) * (.75 + rnd() * .45);
    const v = 80 + rnd() * 90 | 0;
    g.fillStyle = `rgba(${v},${v},${v},${a})`;
    g.fillRect(Math.round(x + Math.cos(t) * d * rx), Math.round(y + Math.sin(t) * d * ry), 1 + (rnd() > .6), 1 + (rnd() > .8));
  }
}

// Built-up and cropped areas.
[[1115, 650, 40, 48, 3600], [1205, 648, 36, 42, 2600], [1160, 640, 84, 58, 2600], [1085, 590, 42, 44, 2200], [1040, 720, 62, 50, 1700], [1025, 745, 42, 20, 1700], [1060, 690, 48, 45, 1600], [1100, 770, 70, 45, 500], [1010, 620, 54, 70, 1200],
 [685, 865, 50, 40, 2300], [765, 872, 44, 34, 1600], [835, 868, 40, 34, 1300], [890, 872, 34, 28, 1500], [1035, 833, 23, 23, 1200], [1030, 885, 56, 26, 1200], [760, 890, 134, 20, 1700], [1240, 570, 90, 35, 500], [1450, 580, 90, 60, 900], [1400, 840, 150, 70, 1200], [720, 640, 95, 115, 900], [850, 640, 115, 105, 900], [1080, 560, 36, 22, 900], [1330, 580, 60, 30, 250], [650, 610, 30, 50, 700], [1500, 600, 60, 40, 700]
].forEach(a => speckle(...a));
// Street grids.
g.strokeStyle = 'rgba(90,90,90,.25)';
g.lineWidth = 1;
[[1095, 625, 40, 50], [1188, 635, 40, 34], [668, 850, 30, 28], [755, 852, 20, 26], [832, 852, 18, 24], [885, 862, 25, 20], [1025, 822, 26, 26]].forEach(([x, y, w, h]) => {
  for (let k = 0; k < w; k += 5) { path([[x + k + .5, y + rnd() * 8], [x + k + 1.5, y + h - rnd() * 8]]); g.stroke(); }
  for (let k = 0; k < h; k += 7) { path([[x + rnd() * 6, y + k + .5], [x + w, y + k - .5]]); g.stroke(); }
});

// Vegetation and cloud-shadow clumps.
[[783, 616, 5], [800, 609, 6], [818, 614, 4], [845, 602, 6], [802, 631, 7], [734, 635, 4], [743, 632, 3], [723, 643, 4], [752, 653, 7], [772, 628, 4], [810, 665, 8], [825, 676, 6], [852, 637, 6], [850, 652, 6], [857, 658, 8], [895, 634, 4], [897, 662, 5], [910, 663, 4], [925, 670, 5], [938, 591, 8], [950, 598, 6], [934, 634, 4], [970, 605, 6], [985, 600, 8], [995, 622, 8], [978, 648, 6], [1003, 604, 6], [984, 632, 7], [755, 690, 6], [748, 694, 5], [788, 695, 5], [830, 690, 4], [715, 720, 6], [732, 718, 5], [757, 720, 8], [760, 735, 6], [770, 735, 5], [837, 722, 4], [860, 730, 6], [873, 745, 6], [898, 720, 7], [921, 703, 4], [954, 704, 3], [970, 714, 6], [933, 730, 4], [978, 735, 5], [983, 675, 5], [1024, 668, 5], [682, 731, 5], [697, 750, 4], [657, 742, 4], [668, 758, 4], [722, 748, 5], [791, 750, 4], [777, 760, 4], [841, 758, 5], [858, 752, 5], [705, 770, 5], [720, 790, 5], [840, 783, 5], [870, 786, 5], [900, 793, 4], [803, 795, 4], [937, 789, 4], [971, 772, 5], [973, 783, 5], [785, 814, 6], [792, 826, 6], [808, 811, 5], [850, 820, 4], [948, 817, 6], [930, 840, 7], [836, 846, 5], [863, 860, 5], [995, 860, 6], [633, 874, 6], [693, 892, 4], [640, 655, 9], [643, 632, 7], [645, 690, 4], [650, 700, 4], [640, 840, 4], [1042, 765, 6], [1042, 752, 5], [997, 813, 3],
 [1117, 535, 6], [1128, 541, 4], [1183, 545, 5], [1210, 588, 7], [1188, 590, 5], [1165, 555, 3], [1085, 570, 10], [1090, 580, 9], [1100, 595, 8], [1075, 600, 9], [1328, 575, 8], [1335, 578, 6], [1353, 590, 8], [1275, 562, 4], [1257, 563, 4], [1391, 567, 6], [1372, 577, 5], [1391, 625, 6], [1440, 545, 9], [1452, 552, 9], [1465, 560, 8], [1430, 555, 6], [1415, 600, 10], [1438, 592, 8], [1475, 605, 10], [1477, 610, 8], [1448, 620, 8], [1512, 592, 8], [1535, 598, 11], [1517, 570, 8], [1548, 565, 8], [1540, 552, 5], [1545, 600, 8], [1455, 655, 8], [1472, 650, 8], [1485, 645, 6], [1495, 672, 5], [1430, 667, 5], [1333, 675, 6], [1375, 660, 5], [1300, 713, 10], [1295, 712, 7], [1313, 695, 4], [1354, 724, 5], [1374, 746, 4], [1389, 743, 4], [1325, 745, 3], [1432, 745, 5], [1466, 757, 6], [1245, 762, 3], [1307, 772, 6], [1285, 773, 5], [1265, 795, 5], [1232, 805, 7], [1210, 783, 4], [1307, 795, 7], [1304, 808, 8], [1325, 800, 6], [1380, 769, 6], [1398, 768, 5], [1452, 778, 7], [1465, 780, 5], [1480, 790, 6], [1490, 782, 5], [1230, 822, 5], [1251, 832, 7], [1290, 830, 6], [1303, 833, 5], [1233, 853, 6], [1280, 862, 6], [1303, 862, 7], [1318, 852, 5], [1258, 872, 6], [1356, 856, 6], [1350, 880, 7], [1343, 897, 6], [1310, 888, 6], [1290, 880, 5], [1408, 898, 8], [1420, 815, 6], [1435, 805, 5], [1462, 832, 6], [1495, 830, 8], [1485, 845, 7], [1495, 810, 5], [1438, 855, 7], [1433, 875, 7], [1472, 872, 6], [1492, 898, 7], [1395, 850, 6], [1370, 845, 5], [1400, 835, 4], [1530, 765, 6], [1110, 868, 3], [1170, 833, 4], [1142, 822, 3], [1125, 868, 4], [1160, 772, 3]
].forEach(([x, y, r]) => clump(x, y, r * 1.1));
for (let i = 0; i < 170; i++) clump(640 + rnd() * 390, 590 + rnd() * 300, 2 + rnd() * 2.5, .12);
for (let i = 0; i < 120; i++) clump(1230 + rnd() * 320, 770 + rnd() * 130, 2.5 + rnd() * 3, .12);
for (let i = 0; i < 60; i++) clump(1380 + rnd() * 170, 550 + rnd() * 120, 2 + rnd() * 4, .12);

// Cloud masks.
g.fillStyle = '#fff';
[[842, 620, 5], [926, 631, 5], [900, 655, 5], [857, 672, 6], [669, 704, 5], [766, 722, 5], [858, 715, 5], [858, 725, 4], [652, 678, 12], [869, 784, 5], [874, 803, 6], [642, 640, 6], [1465, 558, 8], [1480, 566, 9], [1488, 573, 8], [1435, 604, 10], [1473, 594, 9], [1514, 582, 6], [1549, 590, 6], [1555, 600, 8], [1385, 783, 6], [1337, 770, 9], [1350, 780, 11], [1343, 808, 9], [1360, 815, 14], [1378, 820, 17], [1372, 835, 15], [1382, 846, 12], [1420, 806, 6], [1437, 816, 8], [1497, 783, 8], [1534, 767, 6], [1543, 781, 7], [1322, 811, 4], [1335, 868, 5], [1373, 870, 5], [1395, 868, 15], [1402, 880, 14], [1468, 869, 7], [1502, 843, 5], [1514, 858, 5], [1255, 867, 6], [1472, 803, 6]
].forEach(([x, y, r]) => { g.beginPath(); g.ellipse(x, y, r, r * .9, rnd() * 3, 0, 7); g.fill(); });

// Sea and lakes.
const coast = [[1556, 520], [1545, 527], [1535, 533], [1528, 538], [1522, 530], [1512, 523], [1500, 522], [1480, 523], [1455, 527], [1425, 527], [1418, 533], [1400, 539], [1372, 542], [1358, 533], [1350, 541], [1349, 554], [1337, 557], [1323, 553], [1310, 549], [1288, 543], [1230, 537], [1180, 531], [1140, 525], [1118, 521], [1112, 514], [1107, 508], [1095, 505], [1088, 503], [1087, 513], [1078, 517], [1073, 528], [1083, 528], [1088, 535], [1088, 547], [1083, 556], [1074, 563], [1058, 567], [1042, 566], [1018, 561], [996, 550], [974, 537]];
const sea = ragged(coast, .8, true).concat([[900, 500], [627, 500], [627, 150], [1570, 150], [1570, 515]]);
const lake = [[707, 580], [740, 580], [732, 596], [727, 614], [712, 616], [705, 632], [702, 645], [699, 657], [707, 660], [707, 667], [697, 669], [691, 678], [686, 667], [680, 655], [673, 648], [680, 630], [690, 626], [697, 620], [700, 606], [704, 595]];
const pond = [[787, 732], [793, 724], [803, 723], [800, 731], [797, 737], [789, 736]];
const seaPath = new Path2D('M' + sea.map(p => p.join(' ')).join('L') + 'Z');
g.save();
g.clip(seaPath);
g.fillStyle = '#4f4f4f';
g.fillRect(620, 150, 940, 430);
const shade = (x, y, rx, ry, a, v = 25) => {
  g.save(); g.translate(x, y); g.scale(rx, ry);
  const q = g.createRadialGradient(0, 0, 0, 0, 0, 1);
  q.addColorStop(0, `rgba(${v},${v},${v},${a})`); q.addColorStop(.5, `rgba(${v},${v},${v},${a * .55})`); q.addColorStop(1, `rgba(${v},${v},${v},0)`);
  g.fillStyle = q; g.fillRect(-1, -1, 2, 2); g.restore();
};
shade(1235, 410, 150, 70, .28); shade(1335, 480, 45, 100, .5); shade(1350, 455, 85, 80, .38); shade(1343, 540, 30, 45, .9, 10);
shade(1120, 470, 110, 100, .18); shade(1008, 390, 30, 18, .4); shade(1290, 541, 90, 12, .7, 15); shade(1080, 548, 22, 28, .95, 10); shade(976, 365, 22, 30, .5);
shade(1420, 260, 190, 170, .2, 110); shade(1480, 430, 90, 130, .2, 110); shade(1120, 250, 150, 100, .12, 110);
for (let i = 0; i < 170000; i++) {
  const v = rnd() > .5 ? 125 : 25;
  g.fillStyle = `rgba(${v},${v},${v},${rnd() * .22})`;
  g.fillRect(974 + (rnd() * 583 | 0), 160 + (rnd() * 410 | 0), 1, 1);
}
g.strokeStyle = 'rgba(25,25,25,.55)'; g.lineWidth = 4;
path(coast.slice(16, 25)); g.stroke();
path(coast.slice(31)); g.stroke();
g.restore();
g.fillStyle = '#3e3e3e';
path(ragged(lake, 1.6), true); g.fill();
g.fillStyle = '#1e1e1e';
path(ragged(pond, 1), true); g.fill();
g.fillStyle = '#2c2c2c';
path(ragged([[974, 543], [980, 549], [983, 560], [986, 568], [980, 575], [974, 578]], 1), true); g.fill();
path([[839, 770], [845, 764], [846, 767], [841, 772]], true); g.fill();
path([[985, 783], [990, 781], [992, 784], [987, 786]], true); g.fill();
g.fillStyle = '#f0f0f0';
path(ragged([[974, 316], [978, 326], [983, 337], [990, 343], [994, 353], [1000, 362], [1000, 373], [1009, 379], [1011, 385], [1008, 391], [1001, 388], [992, 387], [992, 378], [986, 370], [979, 360], [974, 350]], 1), true); g.fill();
g.save(); g.clip(); speckle(982, 348, 14, 24, 500, .4); g.restore();
g.fillStyle = '#fff'; g.fillRect(1064, 532, 1, 6); g.fillRect(1048, 549, 2, 5);
g.fillStyle = '#111'; g.fillRect(1047, 555, 2, 9);

// Rivers.
function river(pts, ox, oy, w, col, dash) {
  const p = pts.map(([x, y]) => [ox + x / 3, oy + y / 3]);
  g.beginPath(); g.moveTo(p[0][0], p[0][1]);
  for (let i = 1; i < p.length - 1; i++) g.quadraticCurveTo(p[i][0], p[i][1], (p[i][0] + p[i + 1][0]) / 2, (p[i][1] + p[i + 1][1]) / 2);
  g.lineTo(...p[p.length - 1]);
  g.setLineDash(dash || []); g.lineWidth = w; g.strokeStyle = col; g.stroke(); g.setLineDash([]);
}
// Adds small meanders to a coarse course.
const wiggle = (pts, amp) => ragged(pts.map(p => [p[0] / 3, p[1] / 3]), amp, true).map(p => [p[0] * 3, p[1] * 3]);
const main = [[795, 230], [797, 250], [815, 252], [830, 238], [870, 240], [888, 255], [895, 290], [903, 335], [897, 370], [890, 388], [875, 365], [868, 345], [850, 358], [835, 376], [825, 338], [804, 344], [818, 370], [836, 395], [830, 430], [811, 422], [812, 390], [795, 372], [768, 381], [773, 406], [799, 400], [795, 425], [775, 440], [790, 460], [785, 487], [765, 470], [740, 463], [715, 490], [735, 511], [765, 496], [782, 515], [765, 537], [730, 530], [712, 508], [698, 535], [715, 556], [745, 539], [768, 552], [740, 577], [720, 593], [700, 570], [690, 542], [672, 560], [692, 580], [685, 606], [670, 585], [655, 574], [640, 616], [630, 582], [600, 600], [580, 631], [555, 604], [545, 640], [495, 672], [488, 655], [516, 659], [505, 630], [480, 609], [455, 620], [440, 660], [420, 628], [400, 640], [419, 665], [410, 690], [390, 664], [371, 685], [408, 700], [402, 731], [375, 708], [340, 700], [368, 725], [320, 746], [312, 768], [341, 770], [337, 795], [310, 768], [278, 767], [307, 744], [265, 748], [209, 795], [234, 805], [210, 840], [190, 815], [175, 792], [172, 830], [149, 845], [167, 862], [143, 870], [165, 872], [185, 885], [160, 905], [181, 948], [114, 934], [156, 960], [139, 975], [169, 985], [160, 1056], [140, 1014], [130, 1042], [92, 1046], [103, 1064], [137, 1051], [132, 1079], [104, 1085], [102, 1150], [118, 1175], [139, 1180], [130, 1201], [110, 1186], [105, 1210], [120, 1240], [144, 1224], [118, 1242], [140, 1270]];
river(main, 1060, 480, 1.3, '#4a4a4a');
river(wiggle([[1500, 560], [1470, 570], [1490, 600], [1450, 632], [1490, 625], [1480, 600], [1440, 570], [1400, 580], [1380, 555], [1350, 580], [1325, 590], [1315, 625], [1285, 630], [1290, 685], [1265, 690], [1245, 675], [1220, 705], [1245, 722], [1220, 748], [1180, 733], [1150, 748], [1120, 730], [1130, 750], [1108, 728], [1085, 745], [1082, 775], [1045, 795], [1055, 815], [1025, 825], [1035, 860], [1025, 880], [1010, 890], [995, 935], [970, 958], [935, 943], [910, 980], [900, 1008], [880, 1027]], 1.5), 620, 560, 1.1, '#666');
river([[1500, 690], [1485, 650], [1500, 620], [1480, 590], [1495, 560]], 620, 560, 1, '#666');
const faint = (pts, ox, oy, w, col, dash) => river(wiggle(pts, 1.8), ox, oy, w, col, dash);
faint([[22, 655], [50, 635], [85, 615], [120, 640], [170, 645], [235, 640]], 620, 560, .9, '#999', [3, 1]);
faint([[22, 830], [60, 800], [100, 795], [150, 770], [210, 780], [270, 810], [275, 840], [330, 860], [380, 865], [440, 850], [465, 820], [420, 815], [425, 785], [500, 765], [600, 775], [680, 740], [740, 780], [790, 803], [870, 762], [940, 765], [1020, 790], [1050, 800]], 620, 560, .9, '#8a8a8a', [3, 1.5]);
faint([[900, 350], [940, 380], [1000, 405], [1035, 440], [1035, 490], [1060, 540], [1105, 535], [1100, 570], [1135, 595], [1165, 580], [1150, 560], [1210, 560], [1270, 565], [1280, 550], [1320, 580], [1340, 565], [1480, 600]], 1060, 480, .9, '#8c8c8c', [4, 1]);
faint([[940, 385], [985, 420], [990, 480], [1040, 530], [1090, 555]], 1060, 480, .8, '#aaa', [3, 1]);
river([[1325, 745], [1360, 745], [1378, 780], [1345, 800], [1350, 825], [1370, 840], [1388, 915]], 1060, 480, .9, '#888');
faint([[1350, 690], [1400, 680], [1380, 655], [1420, 665], [1445, 685], [1480, 680]], 1060, 480, .8, '#999');
faint([[1445, 690], [1420, 745], [1435, 765], [1480, 745]], 1060, 480, .8, '#999');
faint([[55, 830], [60, 900], [50, 950], [55, 1050], [40, 1150], [30, 1250]], 1060, 480, .9, '#aaa', [4, 2]);
faint([[435, 185], [410, 240], [440, 260], [530, 260], [540, 200]], 1060, 480, .8, '#aaa', [2, 2]);
faint([[600, 290], [595, 350], [560, 420]], 1060, 480, .8, '#aaa', [3, 1]);
faint([[645, 205], [660, 190], [740, 205], [800, 235]], 1060, 480, .8, '#bbb');
faint([[920, 215], [980, 200], [1080, 195], [1120, 175], [1260, 158]], 1060, 480, .8, '#aaa', [3, 1]);
faint([[1330, 1000], [1400, 990], [1440, 980], [1480, 960]], 1060, 480, .8, '#aaa', [2, 1]);
faint([[1350, 930], [1330, 980], [1340, 1050], [1420, 1090], [1425, 1180]], 1060, 480, .8, '#bbb', [2, 1]);
river([[700, 625], [715, 620], [712, 605]], 1060, 480, 1, '#777');
river([[595, 680], [615, 665], [605, 635]], 1060, 480, 1, '#888');
faint([[200, 340], [205, 370], [240, 350], [270, 380], [275, 400]], 620, 560, .9, '#777');
g.restore();
```
